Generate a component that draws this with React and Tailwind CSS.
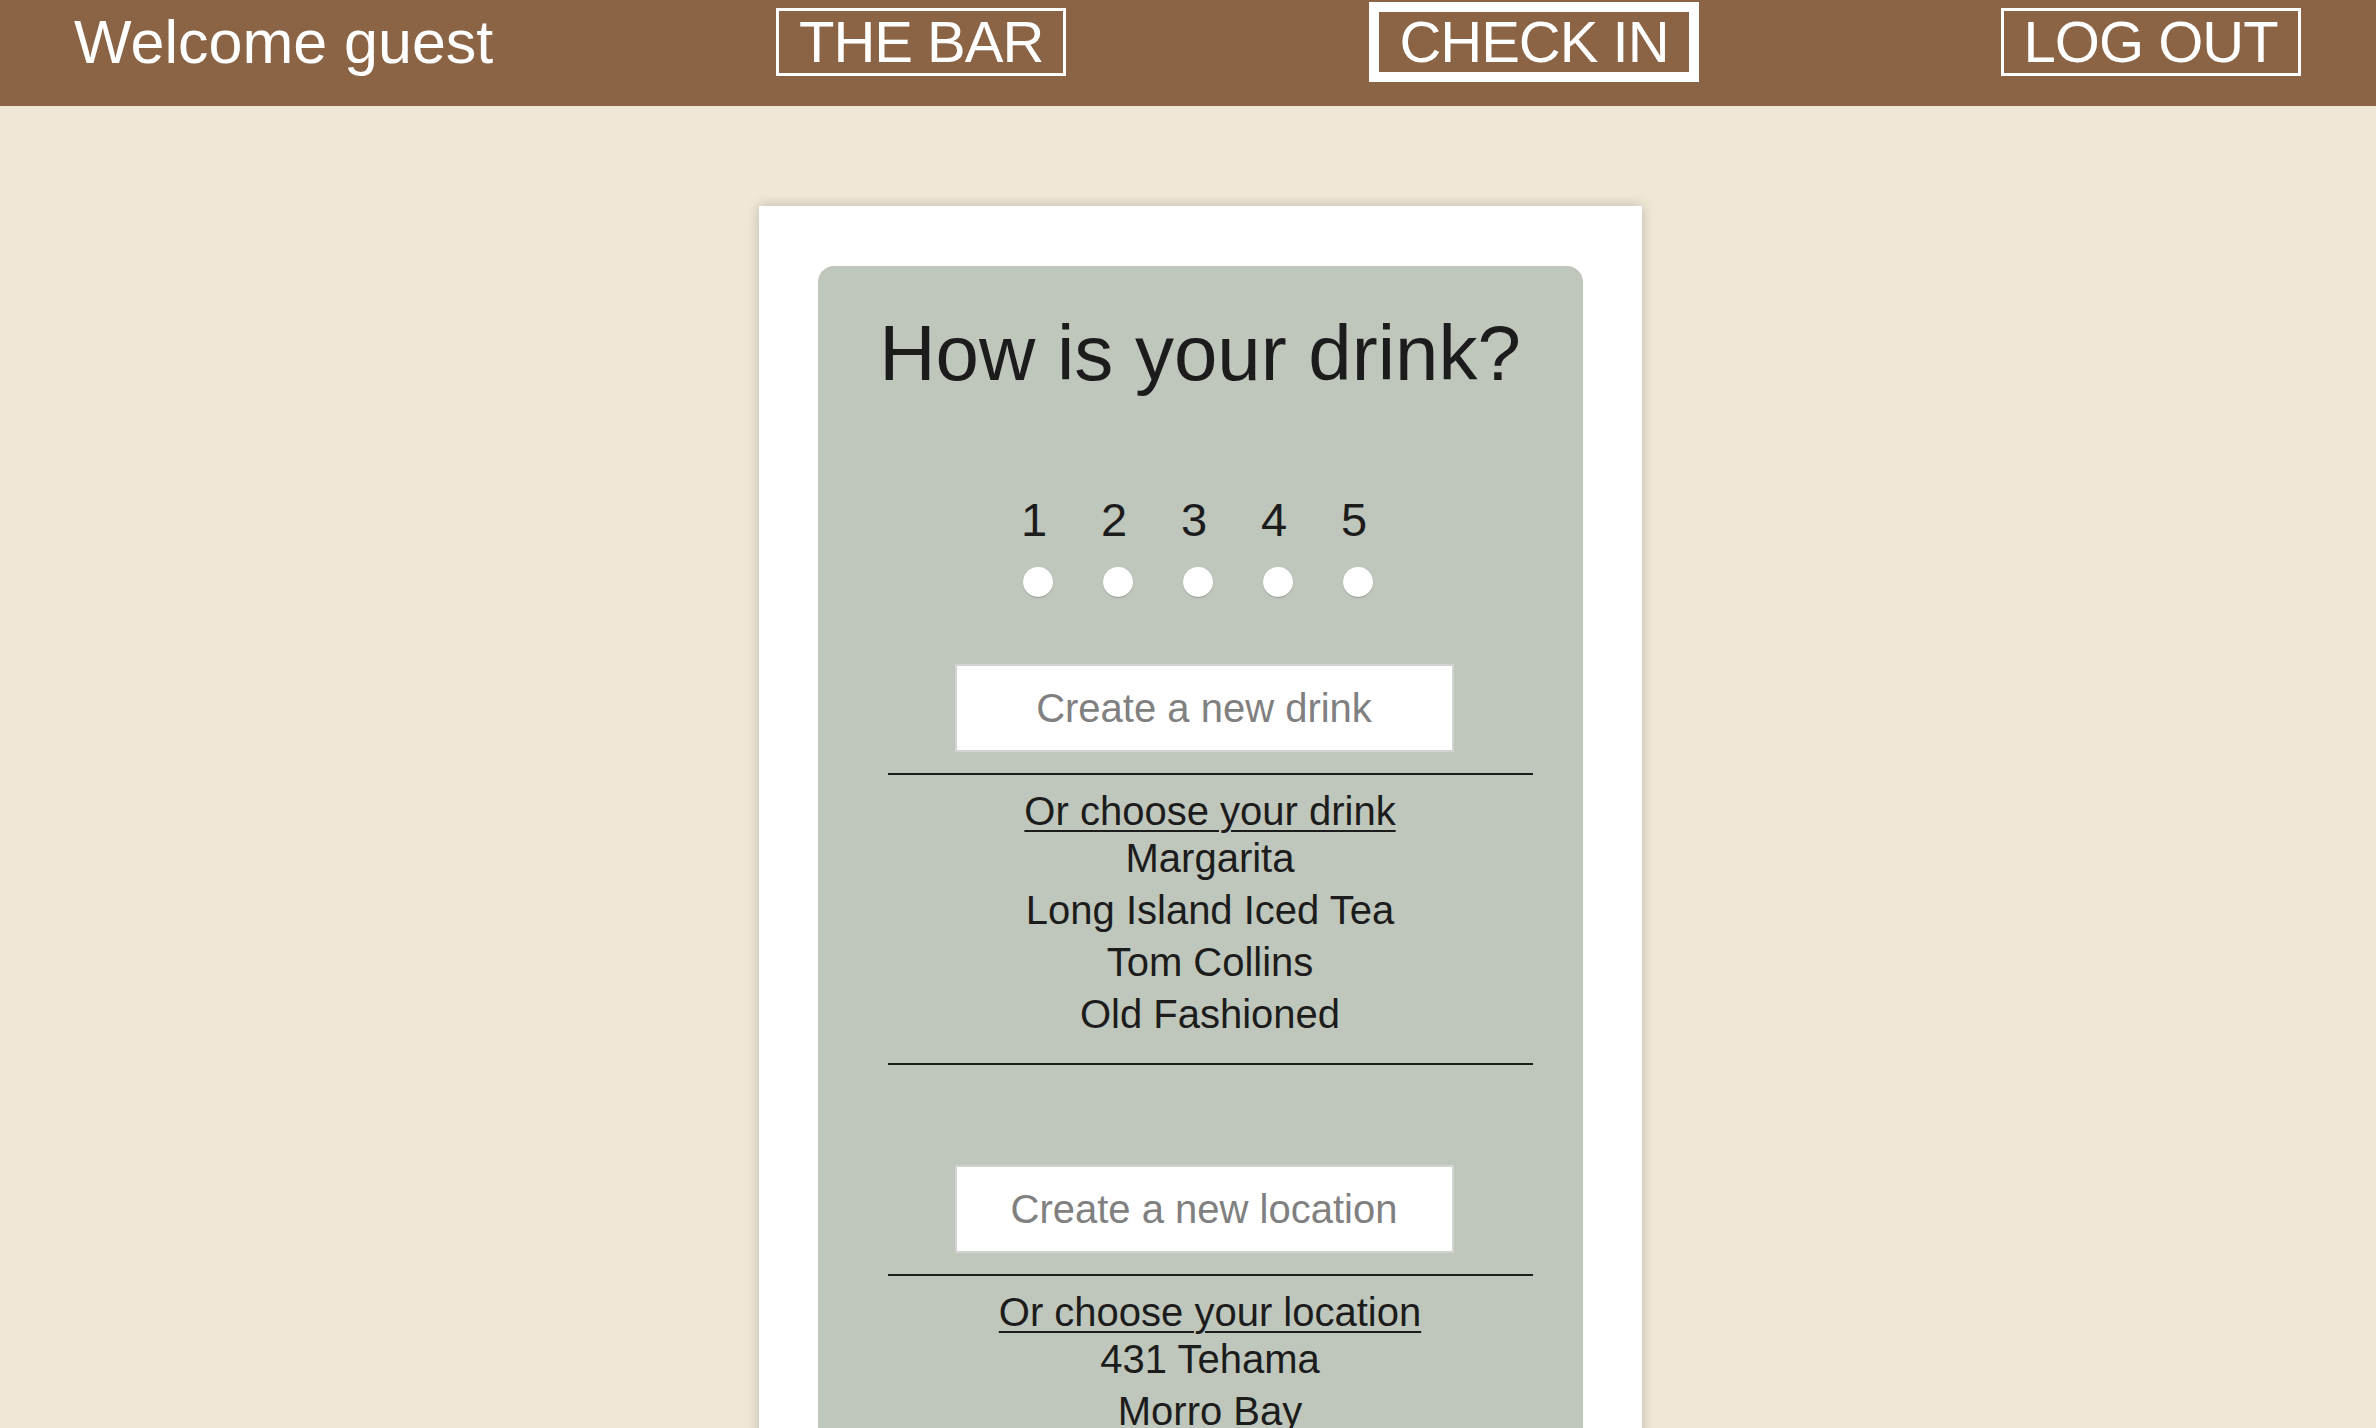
import React from "react";

const font = { fontFamily: '"Liberation Sans", Arial, sans-serif' };

function NavBox({ children, thick, className = "" }) {
  return (
    <div
      className={
        (thick
          ? "border-[10px] border-white px-[20px] h-[80px] flex items-center shrink-0 "
          : "border-[3px] border-white px-[20px] h-[68px] flex items-center shrink-0 ") + className
      }
    >
      <span className="text-white text-[58px] leading-[62px] tracking-[-1px] whitespace-nowrap">
        {children}
      </span>
    </div>
  );
}

function Section({ placeholder, heading, items, first, closing }) {
  return (
    <>
      <input
        type="text"
        placeholder={placeholder}
        className={
          (first ? "mt-[67px]" : "mt-[100px]") +
          " ml-[87px] w-[499px] h-[88px] bg-white border-2 border-[#d2d2d2] text-center text-[40px] text-[#1c1c1c] placeholder:text-[#808080] outline-none"
        }
        style={font}
      />
      <div className="pl-[20px] mt-[21px]">
        <div className="border-t-2 border-[#1c1c1c]" />
        <div className="mt-[15px] text-center text-[40px] text-[#1c1c1c]">
          <div className="leading-[42px] underline decoration-2 underline-offset-[5px]">
            {heading}
          </div>
          {items.map((it) => (
            <div key={it} className="leading-[52px]">
              {it}
            </div>
          ))}
        </div>
        {closing ? <div className="mt-[23px] border-t-2 border-[#1c1c1c]" /> : null}
      </div>
    </>
  );
}

export default function App() {
  return (
    <div className="h-screen overflow-hidden bg-[#f0e8d6]" style={font}>
      <header className="h-[106px] bg-[#8b6446]">
        <div className="h-[84px] pl-[74px] flex items-center">
          <div className="w-[702px] shrink-0">
            <span className="text-white text-[61px] leading-none whitespace-nowrap">
              Welcome guest
            </span>
          </div>
          <NavBox>THE BAR</NavBox>
          <NavBox thick className="ml-[303px]">CHECK IN</NavBox>
          <NavBox className="ml-[302px]">LOG OUT</NavBox>
        </div>
      </header>

      <main className="flex justify-center pt-[100px] pl-[24px]">
        <div className="w-[883px] bg-white px-[59px] pt-[60px] pb-[60px] shadow-[0_0_12px_rgba(0,0,0,0.22)]">
          <div className="bg-[#bfc6bb] rounded-[16px] px-[50px] pt-[48px] pb-[60px] flex flex-col">
            <h1 className="text-center text-[78px] leading-none text-[#1c1c1c]">
              How is your drink?
            </h1>

            <div className="mt-[104px] self-center grid grid-cols-5 w-[400px] -ml-[4px]">
              {[1, 2, 3, 4, 5].map((n) => (
                <div key={n} className="flex flex-col items-center">
                  <span className="text-[47px] leading-none text-[#1c1c1c] pr-[8px]">
                    {n}
                  </span>
                  <span className="mt-[24px] w-[30px] h-[30px] rounded-full bg-white shadow-[0_1px_1px_rgba(0,0,0,0.22)]" />
                </div>
              ))}
            </div>

            <Section
              first
              closing
              placeholder="Create a new drink"
              heading="Or choose your drink"
              items={["Margarita", "Long Island Iced Tea", "Tom Collins", "Old Fashioned"]}
            />
            <Section
              placeholder="Create a new location"
              heading="Or choose your location"
              items={["431 Tehama", "Morro Bay"]}
            />
          </div>
        </div>
      </main>
    </div>
  );
}
